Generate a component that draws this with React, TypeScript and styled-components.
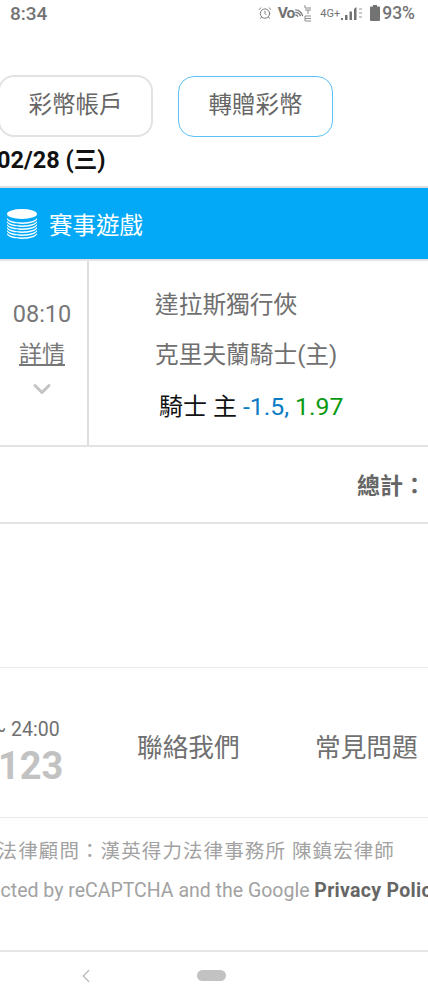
import React from 'react'
import styled, { createGlobalStyle } from 'styled-components'
import { AlarmClock, ChevronDown, ChevronLeft } from 'lucide-react'

const GlobalStyle = createGlobalStyle`
  html, body {
    margin: 0;
    padding: 0;
    background: #fff;
  }
  body {
    font-family: Roboto, "Noto Sans CJK TC", sans-serif;
  }
`

const Screen = styled.div`
  width: 428px;
  height: 1000px;
  overflow: hidden;
  display: flex;
  flex-direction: column;
  background: #fff;
  color: #666;
`

const StatusBar = styled.header`
  height: 28px;
  flex: none;
  display: flex;
  align-items: center;
  justify-content: space-between;
  padding: 0 13px 2px 10px;
  box-sizing: border-box;
  color: #737373;
`

const Clock = styled.span`
  font-size: 19px;
  font-weight: 500;
`

const StatusIcons = styled.div`
  display: flex;
  align-items: center;
`

const Volte = styled.span`
  font-size: 15.5px;
  font-weight: 700;
  letter-spacing: -1px;
  margin-left: 6px;
`

const Network = styled.span`
  font-size: 11px;
  margin-left: 8px;
`

const BatterySlot = styled.span`
  display: flex;
  margin-left: 6px;
`

const Percent = styled.span`
  font-size: 17.5px;
  font-weight: 500;
  margin-left: 2px;
`

const Tabs = styled.nav`
  height: 62px;
  margin-top: 47px;
  flex: none;
  display: flex;
  align-items: center;
  gap: 25px;
  margin-left: -2px;
`

const Tab = styled.button<{ $active?: boolean }>`
  width: 155px;
  height: ${({ $active }) => ($active ? '61px' : '62px')};
  box-sizing: border-box;
  padding: 0 0 6px;
  background: #fff;
  border: ${({ $active }) => ($active ? '1px solid #5cc1f7' : '2px solid #e2e2e2')};
  border-radius: 16px;
  color: #666;
  font-family: Roboto, "Noto Sans CJK TC", sans-serif;
  font-size: 23.5px;
`

const DateLine = styled.div`
  margin: 8px 0 0 -3px;
  height: 30px;
  flex: none;
  line-height: 30px;
  color: #111;
  font-size: 23.5px;
  font-weight: 700;
  white-space: nowrap;
`

const GameHeader = styled.div`
  margin-top: 11px;
  height: 73px;
  flex: none;
  display: flex;
  align-items: center;
  gap: 12px;
  padding-left: 7px;
  box-sizing: border-box;
  background: #03a9f7;
  border-top: 2px solid #dedede;
  color: #fff;
  font-size: 23.5px;
`

const GameRow = styled.section`
  height: 188px;
  flex: none;
  display: flex;
  border-top: 2px solid #e3e3e3;
  border-bottom: 2px solid #e3e3e3;
  box-sizing: border-box;
`

const TimeCell = styled.div`
  width: 89px;
  flex: none;
  box-sizing: border-box;
  padding: 38px 3px 0 0;
  display: flex;
  flex-direction: column;
  align-items: center;
  border-right: 2px solid #dedede;
  color: #777;
`

const Time = styled.span`
  font-size: 23.5px;
  line-height: 30px;
`

const DetailLink = styled.a`
  margin-top: 10px;
  font-size: 23px;
  line-height: 32px;
  text-decoration: underline;
  text-underline-offset: 2px;
  color: #777;
`

const Expand = styled.span`
  display: flex;
  margin-top: 4px;
  color: #c4c4c4;
`

const TeamCell = styled.div`
  padding: 27px 0 0 66px;
  display: flex;
  flex-direction: column;
  gap: 15px;
`

const Team = styled.div`
  font-size: 23.7px;
  line-height: 35px;
  color: #707070;
`

const Pick = styled.div`
  margin: 1px 0 0 4px;
  font-size: 24px;
  line-height: 35px;
  color: #111;
  white-space: nowrap;
`

const Odds = styled.span<{ $tone: string }>`
  color: ${({ $tone }) => $tone};
  font-size: 24.8px;
`

const TotalRow = styled.div`
  height: 77px;
  flex: none;
  box-sizing: border-box;
  padding: 0 0 2px 357px;
  display: flex;
  align-items: center;
  border-bottom: 2px solid #e3e3e3;
  font-size: 23px;
  font-weight: 700;
  color: #666;
  white-space: nowrap;
`

const Spacer = styled.div`
  height: 143px;
  flex: none;
`

const Contact = styled.footer`
  height: 151px;
  flex: none;
  box-sizing: border-box;
  display: flex;
  align-items: center;
  border-top: 1px solid #e9e9e9;
  border-bottom: 1px solid #e9e9e9;
  color: #707070;
`

const Hotline = styled.div`
  width: 139px;
  flex: none;
  margin-left: -2px;
  padding-top: 20px;
`

const Hours = styled.div`
  margin-left: -5px;
  font-size: 19.5px;
  line-height: 26px;
  white-space: nowrap;
  color: #707070;
`

const Phone = styled.div`
  font-size: 38px;
  font-weight: 700;
  line-height: 46px;
  color: #c2c2c2;
`

const ContactLink = styled.a`
  font-size: 25.7px;
  flex: none;
  width: 178px;
  margin-top: 6px;
  white-space: nowrap;
`

const Legal = styled.div`
  height: 134px;
  flex: none;
  box-sizing: border-box;
  padding-top: 20px;
  border-bottom: 2px solid #e6e6e6;
  color: #a2a2a2;
  font-size: 19.5px;
  line-height: 28px;
  white-space: nowrap;
`

const LegalLine = styled.div<{ $indent: number; $spacing: number }>`
  margin-left: ${({ $indent }) => $indent}px;
  margin-bottom: 11px;
  letter-spacing: ${({ $spacing }) => $spacing}px;
`

const Strong = styled.strong`
  color: #666;
  letter-spacing: 0.3px;
`

const NavBar = styled.div`
  flex: 1;
  display: flex;
  align-items: center;
  padding: 0 0 1px 75px;
  color: #bdbdbd;
`

const HomePill = styled.span`
  width: 29px;
  height: 11px;
  margin-left: 100px;
  border-radius: 6px;
  background: #c2c2c2;
`

const CoinStack = () => (
  <svg width="30" height="30" viewBox="0 0 30 30" aria-hidden="true">
    <ellipse cx="15" cy="5" rx="15" ry="5" fill="#fff" />
    {[9, 12, 15, 18, 21, 24].map((y) => (
      <path key={y} d={`M0 ${y}c2 3 8 4.4 15 4.4S28 ${y + 3} 30 ${y}v1.6c-2 3-8 4.4-15 4.4S2 ${y + 4.6} 0 ${y + 1.6}z`} fill="#fff" />
    ))}
  </svg>
)

const WaveIcon = () => (
  <svg width="10" height="12" viewBox="0 0 16 16" fill="none" stroke="#737373" strokeWidth="2" aria-hidden="true">
    <path d="M2 3c5 0 10 4 12 10M2 7c3 0 7 2 8.500 6M2 11c2 0 3.500 1 4.500 3" />
  </svg>
)

const LteIcon = () => (
  <svg width="8" height="18" viewBox="0 0 8 18" fill="none" stroke="#8a8a8a" strokeWidth="1" aria-hidden="true">
    <path d="M1 1v3h6M1 6h6M4 6v4M1 12h6M1 12v5h6M1 14.500h6" />
  </svg>
)

const SignalIcon = () => (
  <svg width="24" height="18" viewBox="0 0 24 18" aria-hidden="true">
    <path d="M1 16h2v-2H1zM5 16h2.500v-5H5zM9.500 16H12V7.500H9.500zM14 16h2.500V3L14 5z" fill="#737373" />
    <path d="M19 4h3v2h-3zM19 8h3v2h-3zM19 12h3v2h-3z" fill="#c9c9c9" />
  </svg>
)

const BatteryIcon = () => (
  <svg width="10" height="16" viewBox="0 0 10 16" aria-hidden="true">
    <path d="M3 0h4v1.500h2a1 1 0 0 1 1 1V15a1 1 0 0 1-1 1H1a1 1 0 0 1-1-1V2.500a1 1 0 0 1 1-1h2z" fill="#737373" />
  </svg>
)

export default function App() {
  return (
    <Screen>
      <GlobalStyle />
      <StatusBar>
        <Clock>8:34</Clock>
        <StatusIcons>
          <AlarmClock size={14} strokeWidth={1.6} />
          <Volte>Vo</Volte>
          <WaveIcon />
          <LteIcon />
          <Network>4G+</Network>
          <SignalIcon />
          <BatterySlot>
            <BatteryIcon />
          </BatterySlot>
          <Percent>93%</Percent>
        </StatusIcons>
      </StatusBar>

      <Tabs>
        <Tab>彩幣帳戶</Tab>
        <Tab $active>轉贈彩幣</Tab>
      </Tabs>
      <DateLine>02/28 (三)</DateLine>

      <GameHeader>
        <CoinStack />
        賽事遊戲
      </GameHeader>

      <GameRow>
        <TimeCell>
          <Time>08:10</Time>
          <DetailLink>詳情</DetailLink>
          <Expand>
            <ChevronDown size={28} strokeWidth={2.6} />
          </Expand>
        </TimeCell>
        <TeamCell>
          <Team>達拉斯獨行俠</Team>
          <Team>克里夫蘭騎士(主)</Team>
          <Pick>
            騎士 主 <Odds $tone="#0b7cc4">-1.5,</Odds> <Odds $tone="#0a9a12">1.97</Odds>
          </Pick>
        </TeamCell>
      </GameRow>

      <TotalRow>總計：</TotalRow>
      <Spacer />

      <Contact>
        <Hotline>
          <Hours>~ 24:00</Hours>
          <Phone>123</Phone>
        </Hotline>
        <ContactLink>聯絡我們</ContactLink>
        <ContactLink>常見問題</ContactLink>
      </Contact>

      <Legal>
        <LegalLine $indent={-23} $spacing={1.1}>本法律顧問：漢英得力法律事務所 陳鎮宏律師</LegalLine>
        <LegalLine $indent={-46} $spacing={0}>
          Protected by reCAPTCHA and the Google <Strong>Privacy Policy</Strong>
        </LegalLine>
      </Legal>

      <NavBar>
        <ChevronLeft size={22} strokeWidth={1.5} />
        <HomePill />
      </NavBar>
    </Screen>
  )
}
